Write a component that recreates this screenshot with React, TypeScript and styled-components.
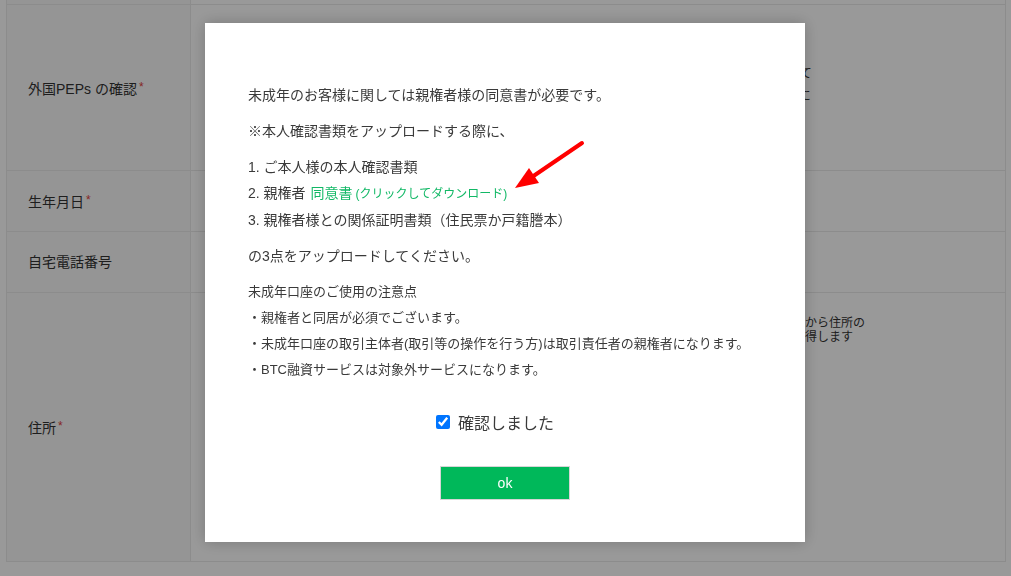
import React from 'react';
import styled, { createGlobalStyle } from 'styled-components';

const GlobalStyle = createGlobalStyle`
  html, body {
    margin: 0;
    padding: 0;
    background: #ffffff;
    font-family: "Liberation Sans", "Noto Sans CJK JP", sans-serif;
    color: #333333;
  }
`;

const Page = styled.div`
  width: 1011px;
  height: 576px;
  overflow: hidden;
  padding-left: 6px;
  box-sizing: border-box;
`;

const FormTable = styled.div`
  width: 998px;
  display: grid;
  grid-template-columns: 184px 1fr;
  grid-template-rows: 5px 166px 61px 61px 269px;
  border-left: 1px solid #e9e9e9;
  border-right: 1px solid #e9e9e9;
`;

const LabelCell = styled.div`
  display: flex;
  align-items: center;
  padding-left: 21px;
  background: #f8f8f8;
  border-right: 1px solid #e9e9e9;
  border-bottom: 1px solid #e9e9e9;
  font-size: 14px;
  line-height: 20px;
  color: #333333;
`;

const ContentCell = styled.div`
  border-bottom: 1px solid #e9e9e9;
  overflow: hidden;
`;

const Required = styled.span`
  color: #e0413a;
  font-size: 12px;
  margin-left: 2px;
  vertical-align: 3px;
`;

const LabelText = styled.span``;

const Note = styled.div<{ $left: number; $top: number; $lh: number }>`
  padding-left: ${(p) => p.$left}px;
  padding-top: ${(p) => p.$top}px;
  font-size: 12px;
  line-height: ${(p) => p.$lh}px;
  color: #333333;
  white-space: nowrap;
`;

const Overlay = styled.div`
  position: fixed;
  inset: 0;
  background: rgba(0, 0, 0, 0.4);
  display: flex;
  justify-content: center;
  align-items: flex-start;
  padding: 23px 1px 0 0;
`;

const Modal = styled.div`
  position: relative;
  width: 600px;
  box-sizing: border-box;
  background: #ffffff;
  padding: 59px 43px 42px;
  box-shadow: 0 0 14px rgba(0, 0, 0, 0.22);
`;

const Para = styled.p<{ $size?: number }>`
  margin: 0 0 10px;
  font-size: ${(p) => p.$size ?? 14}px;
  line-height: 26px;
  color: #3a3a3a;
`;

const List = styled.div<{ $size?: number }>`
  margin: 0 0 10px;
  font-size: ${(p) => p.$size ?? 14}px;
  line-height: 26px;
  color: #3a3a3a;
`;

const Item = styled.div``;

const Link = styled.a`
  color: #12b866;
  text-decoration: none;
  cursor: pointer;
  margin-left: 5px;
`;

const LinkHint = styled.span`
  font-size: 12px;
  margin-left: 3px;
`;

const CheckRow = styled.label`
  display: flex;
  justify-content: center;
  align-items: center;
  height: 22px;
  margin-top: 28px;
  padding-right: 20px;
  font-size: 16px;
  color: #3a3a3a;
  gap: 8px;
`;

const CheckBox = styled.input`
  width: 14px;
  height: 14px;
  margin: 0;
`;

const ButtonRow = styled.div`
  display: flex;
  justify-content: center;
  margin-top: 33px;
`;

const OkButton = styled.button`
  box-sizing: border-box;
  width: 130px;
  height: 34px;
  background: #00b85a;
  border: 1px solid #d6d6d6;
  color: #ffffff;
  font-family: "Liberation Sans", "Noto Sans CJK JP", sans-serif;
  font-size: 14px;
  cursor: pointer;
`;

const Arrow = styled.svg`
  position: absolute;
  left: 305px;
  top: 115px;
  overflow: visible;
`;

const App: React.FC = () => {
  return (
    <>
      <GlobalStyle />
      <Page>
        <FormTable>
          <LabelCell />
          <ContentCell />

          <LabelCell>
            <LabelText>
              外国PEPs の確認<Required>*</Required>
            </LabelText>
          </LabelCell>
          <ContentCell>
            <Note $left={393} $top={58} $lh={22}>
              私は外国の重要な公人ではありません。て
              <br />
              私は外国の重要な公人等に該当します。に
            </Note>
          </ContentCell>

          <LabelCell>
            <LabelText>
              生年月日<Required>*</Required>
            </LabelText>
          </LabelCell>
          <ContentCell />

          <LabelCell>
            <LabelText>自宅電話番号</LabelText>
          </LabelCell>
          <ContentCell />

          <LabelCell>
            <LabelText>
              住所<Required>*</Required>
            </LabelText>
          </LabelCell>
          <ContentCell>
            <Note $left={518} $top={23} $lh={14}>
              入力した郵便番号から住所の
              <br />
              情報を自動的に取得します
            </Note>
          </ContentCell>
        </FormTable>
      </Page>

      <Overlay>
        <Modal>
          <Para>未成年のお客様に関しては親権者様の同意書が必要です。</Para>
          <Para>※本人確認書類をアップロードする際に、</Para>
          <List>
            <Item>1. ご本人様の本人確認書類</Item>
            <Item>
              2. 親権者
              <Link>
                同意書<LinkHint>(クリックしてダウンロード)</LinkHint>
              </Link>
            </Item>
            <Item>3. 親権者様との関係証明書類（住民票か戸籍謄本）</Item>
          </List>
          <Para>の3点をアップロードしてください。</Para>
          <List $size={13}>
            <Item>未成年口座のご使用の注意点</Item>
            <Item>・親権者と同居が必須でございます。</Item>
            <Item>・未成年口座の取引主体者(取引等の操作を行う方)は取引責任者の親権者になります。</Item>
            <Item>・BTC融資サービスは対象外サービスになります。</Item>
          </List>
          <CheckRow>
            <CheckBox type="checkbox" defaultChecked />
            確認しました
          </CheckRow>
          <ButtonRow>
            <OkButton type="button">ok</OkButton>
          </ButtonRow>

          <Arrow width="80" height="54" viewBox="0 0 80 54">
            <line x1="72" y1="5" x2="22" y2="39" stroke="#ff0000" strokeWidth="4" strokeLinecap="round" />
            <polygon points="5,50 19,30 29,45" fill="#ff0000" />
          </Arrow>
        </Modal>
      </Overlay>
    </>
  );
};

export default App;
